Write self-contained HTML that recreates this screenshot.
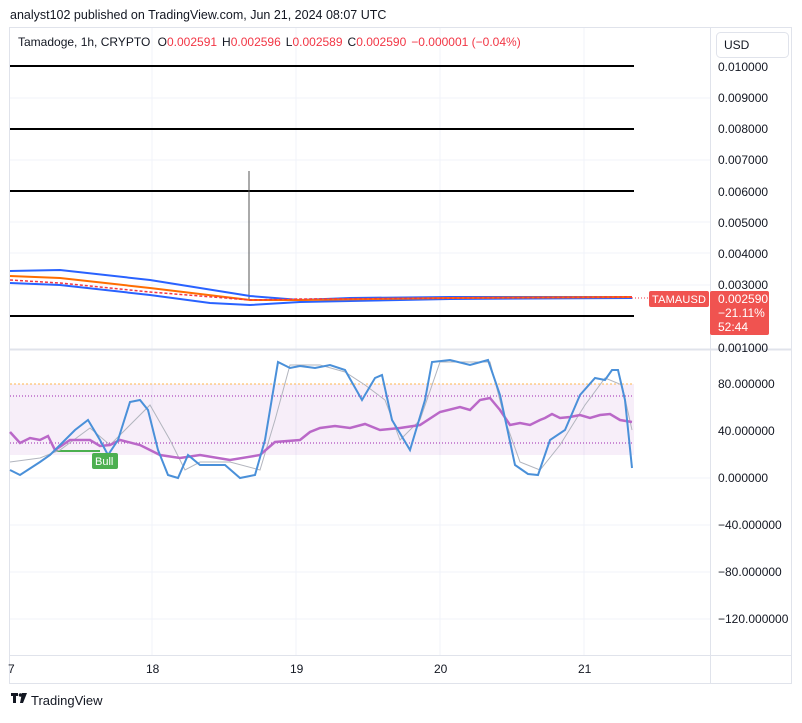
<!DOCTYPE html><html><head><style>
body{margin:0;background:#fff;font-family:"Liberation Sans",sans-serif;}
</style></head><body>
<svg width="802" height="718" xmlns="http://www.w3.org/2000/svg" font-family="Liberation Sans, sans-serif">
<rect width="802" height="718" fill="#fff"/>
<text x="10" y="19" font-size="12.5" fill="#131722">analyst102 published on TradingView.com, Jun 21, 2024 08:07 UTC</text>
<rect x="9.5" y="27.5" width="782" height="656" fill="none" stroke="#e0e3eb"/>
<g stroke="#f0f3fa">
<line x1="10" y1="98" x2="710" y2="98"/><line x1="10" y1="160" x2="710" y2="160"/><line x1="10" y1="222" x2="710" y2="222"/><line x1="10" y1="253" x2="710" y2="253"/><line x1="10" y1="285" x2="710" y2="285"/>
<line x1="10" y1="478" x2="710" y2="478"/><line x1="10" y1="525" x2="710" y2="525"/><line x1="10" y1="572" x2="710" y2="572"/><line x1="10" y1="619" x2="710" y2="619"/>
<line x1="152" y1="28" x2="152" y2="655"/><line x1="296" y1="28" x2="296" y2="655"/><line x1="440" y1="28" x2="440" y2="655"/><line x1="584" y1="28" x2="584" y2="655"/>
</g>
<line x1="710.5" y1="28" x2="710.5" y2="683" stroke="#e0e3eb"/>
<line x1="10" y1="349.5" x2="792" y2="349.5" stroke="#e0e3eb" stroke-width="2"/>
<line x1="10" y1="655.5" x2="792" y2="655.5" stroke="#e0e3eb"/>
<text x="18" y="46" font-size="12" fill="#131722">Tamadoge, 1h, CRYPTO <tspan dx="4">O</tspan><tspan fill="#f23645">0.002591</tspan><tspan dx="5">H</tspan><tspan fill="#f23645">0.002596</tspan><tspan dx="5">L</tspan><tspan fill="#f23645">0.002589</tspan><tspan dx="5">C</tspan><tspan fill="#f23645">0.002590</tspan><tspan dx="5" fill="#f23645">−0.000001 (−0.04%)</tspan></text>
<rect x="716.5" y="32.5" width="72" height="25" rx="4" fill="#fff" stroke="#e0e3eb"/>
<text x="724" y="49" font-size="12" fill="#131722">USD</text>
<g stroke="#000" stroke-width="2"><line x1="10" y1="66" x2="634" y2="66"/><line x1="10" y1="129" x2="634" y2="129"/><line x1="10" y1="191" x2="634" y2="191"/><line x1="10" y1="316" x2="634" y2="316"/></g>
<line x1="249" y1="171" x2="249" y2="300" stroke="#555"/>
<polyline fill="none" stroke="#2962ff" stroke-width="2" points="10,271 60,270 150,280 250,296 300,300 350,298 450,297 632,297"/>
<polyline fill="none" stroke="#2962ff" stroke-width="2" points="10,283 60,285 150,295 210,303 250,305 300,302 450,299 632,298"/>
<polyline fill="none" stroke="#ff6d00" stroke-width="2" points="10,276 60,278 150,288 250,300 300,300 450,298 632,297"/>
<polyline fill="none" stroke="#f23645" stroke-width="1.5" stroke-dasharray="3,2" points="10,280 60,283 150,292 250,300 300,299 632,297"/>
<line x1="632" y1="298" x2="650" y2="298" stroke="#f23645" stroke-dasharray="1,2"/>
<rect x="649" y="291" width="60" height="16" rx="2" fill="#f05350"/>
<text x="652" y="303" font-size="11" fill="#fff" textLength="54">TAMAUSD</text>
<rect x="710" y="291" width="59" height="44" rx="2" fill="#f05350"/>
<text x="718" y="303" font-size="12" fill="#fff">0.002590</text>
<text x="718" y="317" font-size="12" fill="#fff">−21.11%</text>
<text x="718" y="331" font-size="12" fill="#fff">52:44</text>
<g font-size="12" fill="#131722">
<text x="718" y="71">0.010000</text><text x="718" y="102">0.009000</text><text x="718" y="133">0.008000</text><text x="718" y="164">0.007000</text><text x="718" y="196">0.006000</text><text x="718" y="227">0.005000</text><text x="718" y="258">0.004000</text><text x="718" y="289">0.003000</text><text x="718" y="352">0.001000</text>
<text x="718" y="388">80.000000</text><text x="718" y="435">40.000000</text><text x="718" y="482">0.000000</text><text x="718" y="529">−40.000000</text><text x="718" y="576">−80.000000</text><text x="718" y="623">−120.000000</text>
<text x="8" y="673">7</text><text x="146" y="673">18</text><text x="290" y="673">19</text><text x="434" y="673">20</text><text x="578" y="673">21</text>
</g>
<rect x="10" y="384" width="624" height="71" fill="#9c27b0" fill-opacity="0.08"/>
<line x1="10" y1="384" x2="634" y2="384" stroke="#ffb74d" stroke-dasharray="2,2"/>
<line x1="10" y1="396" x2="634" y2="396" stroke="#9c27b0" stroke-dasharray="1,2"/>
<line x1="10" y1="443" x2="634" y2="443" stroke="#9c27b0" stroke-dasharray="1,2"/>
<polyline fill="none" stroke="#4caf50" stroke-width="2" points="55,451 100,451"/>
<polyline fill="none" stroke="#b2b5be" stroke-width="1" points="10,462 40,458 60,450 90,428 110,445 130,425 150,405 170,440 185,470 200,462 230,462 260,470 275,420 290,365 320,365 345,372 365,385 385,400 400,440 420,420 440,362 470,362 490,362 505,420 520,462 540,470 560,445 585,405 605,378 622,385 632,430"/>
<polyline fill="none" stroke="#ba68c8" stroke-width="2.5" points="10,432 20,443 30,438 40,440 48,436 55,450 70,440 90,440 100,446 110,445 120,440 140,445 160,455 180,458 200,455 230,460 260,455 275,442 300,440 310,432 320,428 335,426 350,428 365,424 380,430 400,428 420,425 440,412 460,407 470,410 480,400 490,398 495,404 500,410 510,425 520,423 530,425 540,420 545,418 552,414 560,418 570,417 580,415 590,418 600,415 610,414 620,420 632,422"/>
<polyline fill="none" stroke="#4a90d9" stroke-width="2" points="10,470 20,475 40,462 50,455 60,445 75,430 88,420 100,440 108,455 118,440 130,402 140,400 148,410 158,450 168,475 178,478 188,455 200,465 212,465 225,465 240,478 255,475 265,440 278,362 290,368 300,366 315,368 330,365 345,370 362,400 375,378 382,375 392,420 410,450 425,400 432,362 450,360 470,365 488,360 500,395 515,465 528,474 538,475 550,440 565,430 580,395 595,378 605,380 612,370 618,370 625,400 632,468"/>
<rect x="92" y="453" width="26" height="16" rx="2" fill="#4caf50"/>
<text x="95" y="465" font-size="11" fill="#fff">Bull</text>
<g fill="#131722"><rect x="11" y="693" width="7" height="3"/><rect x="13" y="693" width="3" height="10"/><circle cx="20.5" cy="695" r="1.8"/><path d="M22 693h5l-4 10h-3z"/></g>
<text x="31" y="705" font-size="13" fill="#131722">TradingView</text>
</svg>
</body></html>
